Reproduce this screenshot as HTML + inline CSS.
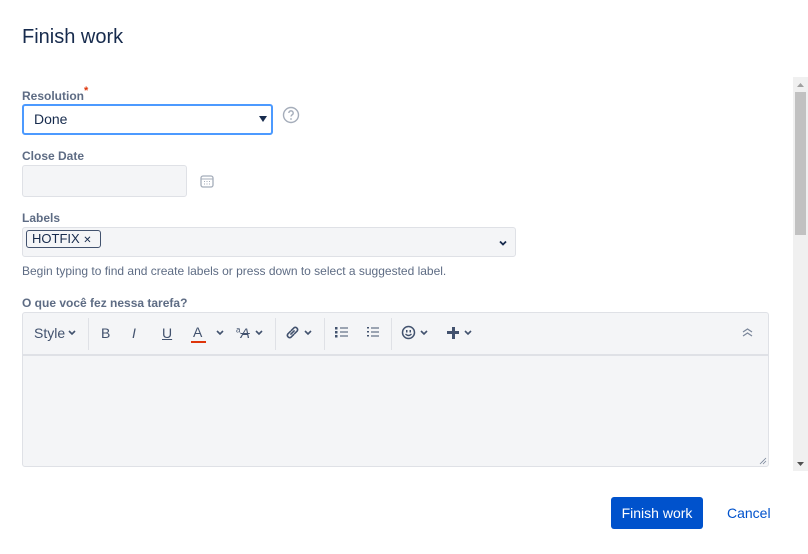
<!DOCTYPE html>
<html><head><meta charset="utf-8"><style>
*{box-sizing:border-box;margin:0;padding:0}
body{width:808px;height:554px;background:#fff;font-family:"Liberation Sans","DejaVu Sans",sans-serif;color:#172b4d;position:relative;overflow:hidden}
.a{position:absolute}
.lbl{font-size:12px;font-weight:bold;color:#5e6c84}
.tb{font-size:14px;color:#42526e}
.sep{position:absolute;top:318px;width:1px;height:32px;background:#dfe1e6}
.ch{position:absolute;top:330px}
</style></head><body>
<div class="a" style="left:22px;top:26px;font-size:20px;color:#172b4d">Finish work</div>

<div class="a lbl" style="left:22px;top:89px">Resolution<span style="color:#de350b;font-size:11px;vertical-align:top;position:relative;top:-4px">*</span></div>
<div class="a" style="left:22px;top:104px;width:251px;height:31px;border:2px solid #4c9aff;border-radius:3px;background:#fff"></div>
<div class="a" style="left:34px;top:111px;font-size:14px">Done</div>
<svg class="a" style="left:259px;top:116px" width="8" height="6"><path d="M0 0h8L4 6z" fill="#172b4d"/></svg>
<svg class="a" style="left:282px;top:106px" width="18" height="18" viewBox="0 0 18 18"><circle cx="9" cy="9" r="7.5" fill="none" stroke="#a5adba" stroke-width="1.4"/><path d="M6.8 7a2.2 2.2 0 114 1.3c-.8.6-1.8 1-1.8 2.2" stroke="#a5adba" stroke-width="1.4" fill="none"/><circle cx="9" cy="13" r="0.9" fill="#a5adba"/></svg>

<div class="a lbl" style="left:22px;top:149px">Close Date</div>
<div class="a" style="left:22px;top:165px;width:165px;height:32px;border:1px solid #dfe1e6;border-radius:3px;background:#f4f5f7"></div>
<svg class="a" style="left:200px;top:174px" width="14" height="14" viewBox="0 0 14 14"><rect x="1" y="2" width="12" height="11" rx="2" fill="none" stroke="#a5adba" stroke-width="1.3"/><line x1="1" y1="5" x2="13" y2="5" stroke="#a5adba"/><g fill="#a5adba"><rect x="4" y="7" width="1" height="1"/><rect x="6.5" y="7" width="1" height="1"/><rect x="9" y="7" width="1" height="1"/><rect x="4" y="9.5" width="1" height="1"/><rect x="6.5" y="9.5" width="1" height="1"/><rect x="9" y="9.5" width="1" height="1"/></g></svg>

<div class="a lbl" style="left:22px;top:211px">Labels</div>
<div class="a" style="left:22px;top:227px;width:494px;height:30px;border:1px solid #dfe1e6;border-radius:3px;background:#f4f5f7"></div>
<div class="a" style="left:26px;top:230px;width:75px;height:18px;border:1px solid #42526e;border-radius:3px;background:#f4f5f7;font-size:13px;line-height:16px;padding-left:5px;color:#172b4d">HOTFIX <span style="font-size:10px">✕</span></div>
<svg class="a" style="left:498px;top:240px" width="10" height="7" viewBox="0 0 10 7"><path d="M2 1.5l3 3 3-3" stroke="#172b4d" stroke-width="1.8" fill="none"/></svg>
<div class="a" style="left:22px;top:264px;font-size:12px;color:#5e6c84">Begin typing to find and create labels or press down to select a suggested label.</div>

<div class="a lbl" style="left:22px;top:296px">O que você fez nessa tarefa?</div>
<div class="a" style="left:22px;top:312px;width:747px;height:155px;border:1px solid #dfe1e6;border-radius:3px;background:#f4f5f7"></div>
<div class="a" style="left:23px;top:354px;width:745px;height:2px;background:#dfe1e6"></div>
<div class="a tb" style="left:34px;top:325px">Style</div>
<svg class="ch" style="left:68px" width="8" height="6"><path d="M1 1l3 3 3-3" stroke="#42526e" stroke-width="1.6" fill="none"/></svg>
<div class="sep" style="left:88px"></div>
<div class="a tb" style="left:101px;top:325px">B</div>
<div class="a tb" style="left:132px;top:325px;font-style:italic">I</div>
<div class="a tb" style="left:162px;top:325px;text-decoration:underline">U</div>
<div class="a tb" style="left:193px;top:324px">A</div>
<div class="a" style="left:191px;top:341px;width:15px;height:2px;background:#de350b"></div>
<svg class="ch" style="left:216px" width="8" height="6"><path d="M1 1l3 3 3-3" stroke="#42526e" stroke-width="1.6" fill="none"/></svg>
<div class="a tb" style="left:236px;top:325px;font-style:italic"><sup style="font-size:8px;font-style:normal">a</sup><s>A</s></div>
<svg class="ch" style="left:255px" width="8" height="6"><path d="M1 1l3 3 3-3" stroke="#42526e" stroke-width="1.6" fill="none"/></svg>
<div class="sep" style="left:275px"></div>
<svg class="a" style="left:284px;top:324px" width="17" height="17" viewBox="0 0 16 16"><path d="M6.5 9.5l3-3M6 7L3.5 9.5a2.2 2.2 0 003 3L9 10M10 9l2.5-2.5a2.2 2.2 0 00-3-3L7 6" stroke="#42526e" stroke-width="1.5" fill="none" stroke-linecap="round"/></svg>
<svg class="ch" style="left:304px" width="8" height="6"><path d="M1 1l3 3 3-3" stroke="#42526e" stroke-width="1.6" fill="none"/></svg>
<div class="sep" style="left:324px"></div>
<svg class="a" style="left:335px;top:326px" width="14" height="12"><g fill="#42526e"><rect x="0" y="1" width="2.5" height="2.5"/><rect x="0" y="5" width="2.5" height="2.5"/><rect x="0" y="9" width="2.5" height="2.5"/><rect x="5" y="1.5" width="8" height="1"/><rect x="5" y="5.5" width="8" height="1"/><rect x="5" y="9.5" width="8" height="1"/></g></svg>
<svg class="a" style="left:366px;top:326px" width="14" height="12"><g fill="#42526e"><rect x="1" y="1" width="2" height="1.5"/><rect x="1" y="5" width="2" height="1.5"/><rect x="1" y="9" width="2" height="1.5"/><rect x="5" y="1.5" width="8" height="1"/><rect x="5" y="5.5" width="8" height="1"/><rect x="5" y="9.5" width="8" height="1"/></g></svg>
<div class="sep" style="left:391px"></div>
<svg class="a" style="left:401px;top:325px" width="15" height="15"><circle cx="7.5" cy="7.5" r="6" fill="none" stroke="#42526e" stroke-width="1.5"/><rect x="5" y="5" width="1.5" height="2.5" fill="#42526e"/><rect x="8.5" y="5" width="1.5" height="2.5" fill="#42526e"/><path d="M4.5 9q3 3 6 0" stroke="#42526e" stroke-width="1.3" fill="none"/></svg>
<svg class="ch" style="left:420px" width="8" height="6"><path d="M1 1l3 3 3-3" stroke="#42526e" stroke-width="1.6" fill="none"/></svg>
<div class="a" style="left:447px;top:331px;width:12px;height:3px;background:#42526e"></div>
<div class="a" style="left:451.5px;top:326.5px;width:3px;height:12px;background:#42526e"></div>
<svg class="ch" style="left:464px" width="8" height="6"><path d="M1 1l3 3 3-3" stroke="#42526e" stroke-width="1.6" fill="none"/></svg>
<svg class="a" style="left:742px;top:328px" width="11" height="9"><path d="M1 4l4.5-3 4.5 3M1 8l4.5-3 4.5 3" stroke="#7a869a" stroke-width="1.2" fill="none"/></svg>
<svg class="a" style="left:759px;top:457px" width="8" height="8"><path d="M7 1L1 7M7 4L4 7" stroke="#7a869a" stroke-width="0.8"/></svg>

<div class="a" style="left:793px;top:77px;width:15px;height:394px;background:#f0f0f0"></div>
<div class="a" style="left:795px;top:92px;width:11px;height:143px;background:#c1c1c1"></div>
<svg class="a" style="left:797px;top:83px" width="7" height="4"><path d="M0 4h7L3.5 0z" fill="#a0a0a0"/></svg>
<svg class="a" style="left:797px;top:462px" width="7" height="4"><path d="M0 0h7L3.5 4z" fill="#505050"/></svg>

<div class="a" style="left:611px;top:497px;width:92px;height:32px;background:#0052cc;border-radius:3px;color:#fff;font-size:14px;text-align:center;line-height:32px">Finish work</div>
<div class="a" style="left:727px;top:505px;font-size:14px;color:#0052cc">Cancel</div>
</body></html>
